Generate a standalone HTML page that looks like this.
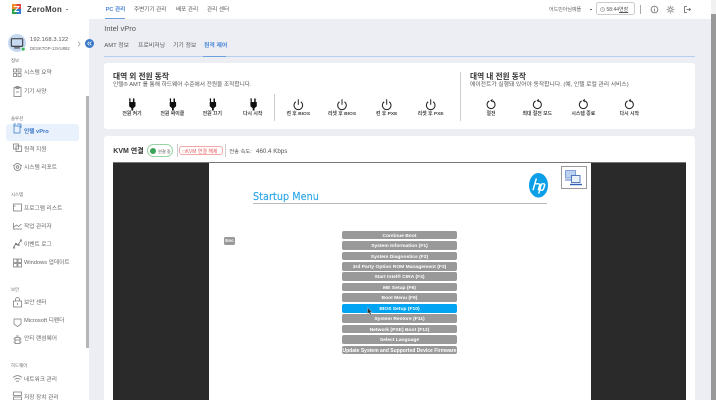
<!DOCTYPE html>
<html lang="ko"><head><meta charset="utf-8"><title>ZeroMon</title>
<style>
*{box-sizing:border-box}
html,body{margin:0;padding:0;width:716px;height:400px;overflow:hidden;background:#eceef3;font-family:"Liberation Sans","Noto Sans CJK KR",sans-serif;color:#444}
#w{position:relative;width:716px;height:400px;overflow:hidden;background:#eceef3;filter:blur(.2px)}
.a{position:absolute;white-space:nowrap;line-height:1}
.c{transform:translateX(-50%)}
svg{position:absolute;overflow:visible}
.m{position:absolute;left:341.7px;width:115.6px;height:8.8px;background:#999;border-radius:2px;color:#fff;font-size:4.95px;font-weight:700;text-align:center;line-height:11.6px;white-space:nowrap;overflow:hidden}
.s{font-size:5.7px;color:#666;margin-top:1.6px}
.h{font-size:4.4px;color:#666;margin-top:1px}
.l{font-size:4.9px;color:#444;font-weight:700;margin-top:2.2px}
.t{font-size:5.6px;color:#555;margin-top:2px}
.i{fill:none;stroke:#666;stroke-width:.8}
</style></head><body><div id="w">
<div class="a" style="left:0;top:0;width:716px;height:19px;background:#fff"></div>
<div class="a" style="left:0;top:19px;width:89px;height:381px;background:#fff"></div>
<div class="a" style="left:86px;top:96px;width:3px;height:252px;background:#b5b5b5"></div>
<div class="a" style="left:711px;top:0;width:5px;height:400px;background:#f1f1f1"></div>
<div class="a" style="left:711px;top:13.5px;width:5px;height:386.5px;background:#999"></div>

<svg style="left:12px;top:4px" width="9" height="10" viewBox="0 0 9 10"><rect width="4.5" height="5" fill="#f28c28"/><rect x="4.5" width="4.5" height="5" fill="#e8403a"/><rect y="5" width="4.5" height="5" fill="#2f9e44"/><rect x="4.5" y="5" width="4.5" height="5" fill="#2d7fd6"/><path d="M2 2.5H7L2.5 7.5H7" fill="none" stroke="#fff" stroke-width="1"/></svg>
<div class="a" style="left:27px;top:6px;font-size:7.8px;font-weight:700;color:#3a3a3a;letter-spacing:.3px">ZeroMon</div>
<div class="a" style="left:65.5px;top:9px;width:2px;height:1px;background:#888"></div>

<div class="a" style="left:105.7px;top:8.200px;font-size:5.6px;color:#4a86d6;font-weight:700">PC 관리</div>
<div class="a" style="left:105px;top:18px;width:20px;height:1px;background:#6ea0e0"></div>
<div class="a t" style="left:134px;top:6.2px">주변기기 관리</div>
<div class="a t" style="left:176px;top:6.2px">배포 관리</div>
<div class="a t" style="left:207px;top:6.2px">관리 센터</div>

<div class="a" style="left:549px;top:8.200px;font-size:5px;color:#666">어드민아님예뜰</div>
<div class="a" style="left:590px;top:9px;width:2px;height:1px;background:#666"></div>
<div class="a" style="left:596px;top:2.3px;width:39px;height:13px;border:.8px solid #ccc;border-radius:2.5px;background:#fff"></div>
<svg style="left:600px;top:6.5px" width="5" height="5" viewBox="0 0 5 5"><circle cx="2.5" cy="2.5" r="2" fill="none" stroke="#777" stroke-width=".5"/><path d="M2.5 1.2V2.6L3.4 3.2" fill="none" stroke="#777" stroke-width=".4"/></svg>
<div class="a" style="left:606.5px;top:8px;font-size:5px;color:#555">58:44<u>연장</u></div>
<div class="a" style="left:640px;top:4.5px;width:1px;height:9px;background:#aaa"></div>
<svg style="left:649.5px;top:4.5px" width="9" height="9" viewBox="0 0 9 9"><circle cx="4.5" cy="4.5" r="3.4" class="i"/><path d="M4.5 2.6v.8M4.5 4.1v2.4" class="i"/></svg>
<svg style="left:666px;top:4.5px" width="9" height="9" viewBox="0 0 9 9"><circle cx="4.5" cy="4.5" r="1.7" class="i" stroke-width=".7"/><path d="M4.5.6v1.2M4.5 7.2v1.2M.6 4.5h1.2M7.2 4.5h1.2M1.7 1.7l.9.9M6.4 6.4l.9.9M1.7 7.3l.9-.9M6.4 2.6l.9-.9" class="i" stroke-width=".7"/></svg>
<svg style="left:683px;top:4.5px" width="9" height="9" viewBox="0 0 9 9"><path d="M4 1.500H1.500v6H4" class="i"/><path d="M3.500 4.500h4M6 3.200l1.500 1.300L6 5.800" class="i"/></svg>

<svg style="left:7.500px;top:34px" width="18" height="18" viewBox="0 0 19 19"><circle cx="9.5" cy="9.5" r="9.500" fill="#c5d9f1"/><rect x="3.5" y="5" width="12" height="8" rx=".7" fill="none" stroke="#333" stroke-width="1.1"/><path d="M6.5 14.7H12.5" stroke="#333" stroke-width="1.1"/><circle cx="16" cy="16" r="2" fill="#3cb562" stroke="#fff" stroke-width=".6"/></svg>
<div class="a" style="left:30px;top:38px;font-size:5.800px;color:#555;letter-spacing:.1px">192.168.3.122</div>
<div class="a" style="left:30px;top:47.300px;font-size:4.300px;color:#666">DESKTOP-13VU892</div>
<svg style="left:77px;top:40.500px" width="4" height="6" viewBox="0 0 4 6"><path d="M1 .8L3.2 3 1 5.2" fill="none" stroke="#888" stroke-width=".6"/></svg>
<svg style="left:85px;top:39px" width="9" height="9" viewBox="0 0 9 9"><circle cx="4.5" cy="4.5" r="4.5" fill="#3a78c9"/><path d="M4.3 2.6L2.6 4.5l1.7 1.9M6.4 2.6L4.7 4.5l1.7 1.9" fill="none" stroke="#fff" stroke-width=".7"/></svg>

<div class="a h" style="left:11px;top:57.800px">정보</div>
<div class="a s" style="left:24px;top:69.800px">시스템 요약</div>
<div class="a s" style="left:24px;top:88px">기기 사양</div>
<div class="a h" style="left:11px;top:116.300px">솔루션</div>
<div class="a" style="left:6px;top:124px;width:73px;height:17px;background:#e9f1fc;border-radius:3px"></div>
<div class="a s" style="left:24px;top:128.300px;color:#3a78c9;font-weight:700">인텔 vPro</div>
<div class="a s" style="left:24px;top:146.300px">원격 지원</div>
<div class="a s" style="left:24px;top:164.300px">시스템 리포트</div>
<div class="a h" style="left:11px;top:192.300px">시스템</div>
<div class="a s" style="left:24px;top:205.300px">프로그램 리스트</div>
<div class="a s" style="left:24px;top:223.300px">작업 관리자</div>
<div class="a s" style="left:24px;top:241.300px">이벤트 로그</div>
<div class="a s" style="left:24px;top:259.300px">Windows 업데이트</div>
<div class="a h" style="left:11px;top:287px">보안</div>
<div class="a s" style="left:24px;top:299.800px">보안 센터</div>
<div class="a s" style="left:24px;top:317.800px">Microsoft 디펜더</div>
<div class="a s" style="left:24px;top:335.300px">안티 랜섬웨어</div>
<div class="a h" style="left:11px;top:362.800px">하드웨어</div>
<div class="a s" style="left:24px;top:376.300px">네트워크 관리</div>
<div class="a s" style="left:24px;top:394.300px">저장 장치 관리</div>

<svg style="left:12px;top:68px" width="12" height="330" viewBox="0 0 12 330" fill="none" stroke="#777" stroke-width=".75">
<path d="M1.500 1h3v3h-3zM6 1h3v3H6zM1.500 5.500h3v3h-3zM6 5.500h3v3H6z"/>
<path d="M2 19.500h7v9H2zM4 18.500h3v2H4zM4 24h3"/>
<path d="M2 58h6v7H2zM2 58V56h2" stroke="#3a78c9"/><path d="M5 56h4v4" stroke="#3a78c9"/>
<path d="M1.500 76h5v5h-5zM4 78h5.500v5.500H4z"/>
<circle cx="5.500" cy="99" r="3.500"/><circle cx="5.500" cy="99" r="1.300"/><path d="M1 97l1.500 1M10 97l-1.500 1"/>
<path d="M1.500 136h8v7h-8zM1.500 138h2"/>
<path d="M1.500 155v6h8.500M2 159l2.500-2 2 1.500 3-2.500"/>
<path d="M1.500 179l2.500-3 2 1 2.500-4"/><circle cx="2" cy="179.500" r=".8"/><circle cx="4" cy="176" r=".8"/><circle cx="6.500" cy="177" r=".8"/><circle cx="9" cy="172.500" r=".8"/>
<path d="M1.500 191h3.500v3.500H1.500zM6 191h3.500v3.500H6zM1.500 195.500h3.500V199H1.500zM6 195.500h3.500V199H6z"/>
<path d="M1.500 233h8v6h-8zM3.500 233v-1.500a2 2 0 0 1 4 0V233M5.500 235v2"/>
<path d="M2 251h7v5l-3.500 2.500L2 256z"/>
<path d="M3 269.500h5v6H3zM4 268l3 0M1.500 271h1.500M1.500 274h1.500M8 271h1.500M8 274h1.500M3 272h5"/>
<path d="M1 309.500c3-2.500 6-2.500 9 0M2.500 311.500c2-1.500 4-1.500 6 0M4 313.500c1-.7 2-.7 3 0"/>
<path d="M1.500 324h8v3.500h-8zM1.500 329h8v3h-8z"/>
</svg>

<div class="a" style="left:104.300px;top:24.500px;font-size:7.500px;color:#555">Intel vPro</div>
<div class="a" style="left:104.300px;top:44.300px;font-size:5.900px;color:#555">AMT 정보</div>
<div class="a" style="left:138px;top:44.300px;font-size:5.900px;color:#555">프로비저닝</div>
<div class="a" style="left:173px;top:44.300px;font-size:5.900px;color:#555">기기 정보</div>
<div class="a" style="left:204px;top:44.300px;font-size:5.900px;color:#4a86d6;font-weight:700">원격 제어</div>
<div class="a" style="left:104px;top:56.300px;width:591px;height:1px;background:#b5cff0"></div>
<div class="a" style="left:203px;top:55.800px;width:23px;height:1.500px;background:#6ea0e0"></div>

<div class="a" style="left:104px;top:63px;width:590.500px;height:66px;background:#fff;border-radius:3px"></div>
<div class="a" style="left:113px;top:72.800px;font-size:7.700px;font-weight:700;color:#333">대역 외 전원 동작</div>
<div class="a" style="left:113px;top:83.200px;font-size:5.700px;color:#555">인텔® AMT 를 통해 하드웨어 수준에서 전원을 조작합니다.</div>
<div class="a" style="left:274px;top:94px;width:1px;height:27px;background:#ccc"></div>
<div class="a" style="left:460px;top:72px;width:1px;height:49px;background:#ccc"></div>
<div class="a" style="left:470px;top:72.800px;font-size:7.700px;font-weight:700;color:#333">대역 내 전원 동작</div>
<div class="a" style="left:470px;top:83.200px;font-size:5.800px;color:#555">에이전트가 실행돼 있어야 동작합니다. (예, 인텔 로컬 관리 서비스)</div>

<svg style="left:0;top:0" width="716" height="130" viewBox="0 0 716 130">
<g fill="#111">
<path transform="translate(131.700 0)" d="M-2.700 98.500h1.500v3.500h2.400v-3.500h1.500v3.500h1.100v4.200l-2.300 2v2.300h-1.800v-2.300l-2.300-2v-4.200h.4z"/>
<path transform="translate(172.300 0)" d="M-2.700 98.500h1.500v3.500h2.400v-3.500h1.500v3.500h1.100v4.200l-2.300 2v2.300h-1.800v-2.300l-2.300-2v-4.200h.4z"/>
<path transform="translate(212.300 0)" d="M-2.700 98.500h1.500v3.500h2.400v-3.500h1.500v3.500h1.100v4.200l-2.300 2v2.300h-1.800v-2.300l-2.300-2v-4.200h.4z"/>
<path transform="translate(253 0)" d="M-2.700 98.500h1.500v3.500h2.400v-3.500h1.500v3.500h1.100v4.200l-2.300 2v2.300h-1.800v-2.300l-2.300-2v-4.200h.4z"/>
</g>
<g fill="none" stroke="#222" stroke-width="1">
<path d="M295.800 101.800a4.300 4.300 0 1 0 5 0M298.300 99.300v5.500"/>
<path d="M339.500 101.800a4.300 4.300 0 1 0 5 0M342 99.300v5.500"/>
<path d="M384.200 101.800a4.300 4.300 0 1 0 5 0M386.700 99.300v5.500"/>
<path d="M428.200 101.800a4.300 4.300 0 1 0 5 0M430.700 99.300v5.500"/>
<path d="M489.300 101a4 4 0 1 0 3.500 0"/><path d="M492.500 98.800v3.600l-2.300-1.800z" fill="#222" stroke="none"/>
<path d="M535.600 101a4 4 0 1 0 3.500 0"/><path d="M538.800 98.800v3.600l-2.300-1.800z" fill="#222" stroke="none"/>
<path d="M581.600 101a4 4 0 1 0 3.500 0"/><path d="M584.800 98.800v3.600l-2.300-1.800z" fill="#222" stroke="none"/>
<path d="M627.600 101a4 4 0 1 0 3.500 0"/><path d="M630.800 98.800v3.600l-2.300-1.800z" fill="#222" stroke="none"/>
</g></svg>

<div class="a c l" style="left:132px;top:111.300px">전원 켜기</div>
<div class="a c l" style="left:172.300px;top:111.300px">전원 싸이클</div>
<div class="a c l" style="left:212.300px;top:111.300px">전원 끄기</div>
<div class="a c l" style="left:252.700px;top:111.300px">다시 시작</div>
<div class="a c l" style="left:298.300px;top:111.300px">켠 후 BIOS</div>
<div class="a c l" style="left:342px;top:111.300px">리셋 후 BIOS</div>
<div class="a c l" style="left:386.700px;top:111.300px">켠 후 PXE</div>
<div class="a c l" style="left:430.700px;top:111.300px">리셋 후 PXE</div>
<div class="a c l" style="left:491px;top:111.300px">절전</div>
<div class="a c l" style="left:537.300px;top:111.300px">최대 절전 모드</div>
<div class="a c l" style="left:583.300px;top:111.300px">시스템 종료</div>
<div class="a c l" style="left:629.300px;top:111.300px">다시 시작</div>

<div class="a" style="left:104px;top:136px;width:590.500px;height:270px;background:#fff;border-radius:3px"></div>
<div class="a" style="left:113.300px;top:147.800px;font-size:7px;font-weight:700;color:#333">KVM 연결</div>
<div class="a" style="left:147.300px;top:144.300px;width:26px;height:12.400px;border:.7px solid #98d3a4;border-radius:6.200px"></div>
<div class="a" style="left:150.300px;top:147.500px;width:6px;height:6px;background:#3aa655;border-radius:50%"></div>
<div class="a" style="left:158px;top:149.500px;font-size:4.200px;color:#555">연결 중</div>
<div class="a" style="left:176.500px;top:144px;width:1px;height:12.500px;background:#ccc"></div>
<div class="a" style="left:179.300px;top:145.700px;width:44px;height:9.500px;border:.7px solid #f2a6a6;border-radius:3px"></div>
<div class="a" style="left:182.500px;top:149.500px;font-size:5px;color:#e85c5c">□KVM 연결 해제</div>
<div class="a" style="left:225px;top:144px;width:1px;height:12.500px;background:#ccc"></div>
<div class="a" style="left:229.300px;top:149.500px;font-size:5.300px;color:#555">전송 속도:</div>
<div class="a" style="left:256px;top:148.500px;font-size:6.200px;color:#555">460.4 Kbps</div>

<div class="a" style="left:113px;top:162px;width:573px;height:238px;background:#fff;border-top:1px solid #777"></div>
<div class="a" style="left:113px;top:162.500px;width:96px;height:238px;background:#2a2a2a"></div>
<div class="a" style="left:590.700px;top:162.500px;width:95px;height:238px;background:#2a2a2a"></div>

<div class="a" style="left:253px;top:190.500px;font-size:11px;color:#2ba6e8;letter-spacing:.1px;font-family:'DejaVu Sans',sans-serif;transform-origin:left;transform:scaleX(.87);-webkit-text-stroke:.15px #2ba6e8">Startup Menu</div>
<div class="a" style="left:253px;top:203px;width:294px;height:.8px;background:#bbb"></div>
<svg style="left:528.500px;top:173.300px" width="19" height="24.500" viewBox="0 0 18 25" preserveAspectRatio="none"><ellipse cx="9" cy="12.500" rx="9" ry="12.500" fill="#0a9fe6"/><path d="M7 5.500L3.800 17.500M6.300 11h2.800c1 0 1.300.7 1 1.600l-1.400 4.900M11.800 11L9.200 21M11.800 11h2c1 0 1.300.7 1 1.600l-1 3.500c-.3.9-.8 1.400-1.600 1.400h-1.500" fill="none" stroke="#fff" stroke-width="1.400"/></svg>
<div class="a" style="left:560.700px;top:166px;width:26px;height:23.300px;border:.8px solid #999;background:#fff"></div>
<svg style="left:565px;top:170px" width="17" height="16" viewBox="0 0 17 16"><rect x=".5" y=".5" width="10" height="7.500" fill="#bcd0ef" stroke="#6a8fd0" stroke-width=".8"/><rect x="6.500" y="5.500" width="8.500" height="7" fill="#e9f0fb" stroke="#2f5fae" stroke-width=".8"/><path d="M5 14.500h12" stroke="#2f5fae" stroke-width="1.400"/><path d="M0 10h6" stroke="#6a8fd0" stroke-width="1.200"/></svg>
<div class="a" style="left:224px;top:237px;width:11px;height:8px;background:#999;border-radius:1.500px;color:#fff;font-size:4.800px;font-weight:700;text-align:center;line-height:10.500px;overflow:hidden">Esc</div>

<div class="m" style="top:230.600px">Continue Boot</div>
<div class="m" style="top:241.300px">System Information (F1)</div>
<div class="m" style="top:251.600px">System Diagnostics (F2)</div>
<div class="m" style="top:261.900px">3rd Party Option ROM Management (F3)</div>
<div class="m" style="top:272.300px">Start Intel® CIRA (F4)</div>
<div class="m" style="top:282.600px">ME Setup (F6)</div>
<div class="m" style="top:293.300px">Boot Menu (F9)</div>
<div class="m" style="top:303.900px;background:#00a4f2">BIOS Setup (F10)</div>
<div class="m" style="top:314.300px">System Restore (F11)</div>
<div class="m" style="top:324.600px">Network (PXE) Boot (F12)</div>
<div class="m" style="top:335.300px">Select Language</div>
<div class="m" style="top:345.600px;font-size:5px">Update System and Supported Device Firmware</div>
<svg style="left:367px;top:306.500px" width="6" height="9" viewBox="0 0 6 9"><path d="M.5.500V7l1.500-1.300L3.200 8l1.200-.6L3.200 5.200H5z" fill="#333" stroke="#ddd" stroke-width=".4"/></svg>
</div></body></html>
